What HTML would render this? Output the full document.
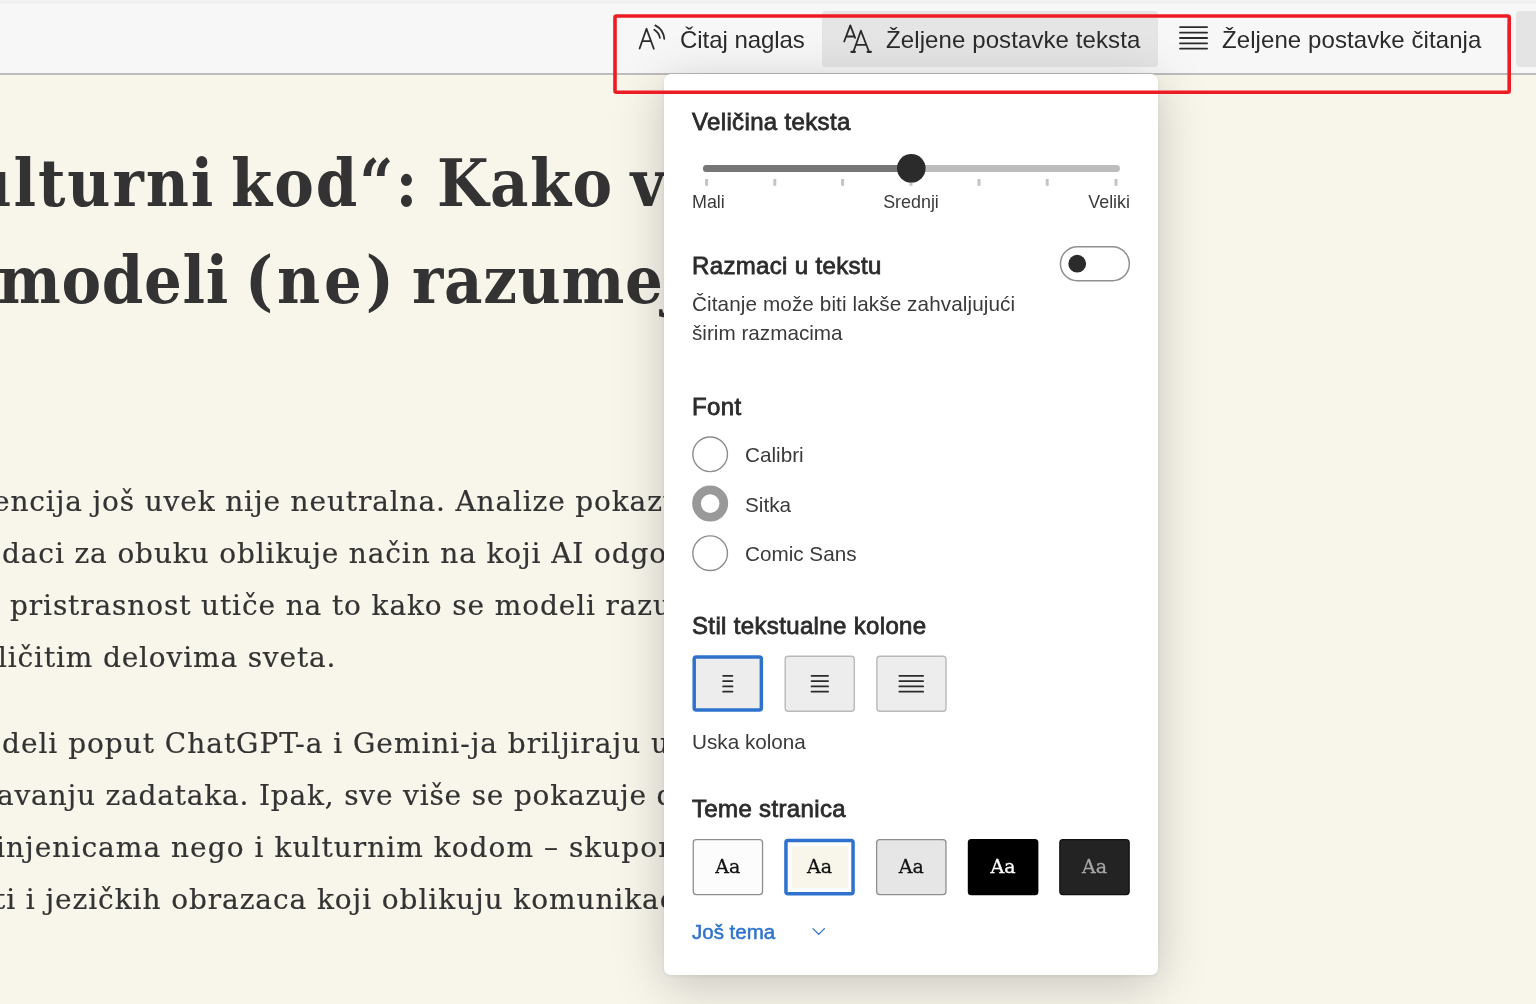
<!DOCTYPE html>
<html lang="sr">
<head>
<meta charset="utf-8">
<title>Čitač</title>
<style>
*{box-sizing:border-box;margin:0;padding:0}
html,body{width:1536px;height:1004px;overflow:hidden}
body{background:#f8f5eb;position:relative;font-family:"Liberation Sans","DejaVu Sans",sans-serif;color:#2b2b2b}
.abs{position:absolute;white-space:nowrap}
/* toolbar */
#bar{position:absolute;left:0;top:0;width:1536px;height:75px;background:#f7f7f7;border-bottom:2px solid #bdbdbd}
#topstrip{position:absolute;left:0;top:0;width:1536px;height:4px;background:linear-gradient(#f5f5f5,#f0f0f0 30%,#eeeeee 60%,#f6f6f6)}
#selbtn{position:absolute;left:822px;top:11px;width:336px;height:56px;background:#e5e5e5;border-radius:4px}
#rbtn{position:absolute;left:1516px;top:11px;width:40px;height:56px;background:#e4e4e4;border-radius:4px}
.tb{font-size:24px;line-height:30px;top:25px;color:#2b2b2b}
/* article */
.h1{font-family:"DejaVu Serif Condensed","DejaVu Serif","Liberation Serif",serif;font-weight:bold;color:#333;font-size:66px;line-height:96px}
.p{font-family:"DejaVu Serif","Liberation Serif",serif;color:#333;font-size:28px;line-height:52px;-webkit-text-stroke:.2px #333}
/* popup */
#pop{position:absolute;left:664px;top:74px;width:494px;height:900.5px;background:#fff;border-radius:7px;box-shadow:0 10px 50px rgba(0,0,0,.205),0 1px 4px rgba(0,0,0,.08);z-index:10}
.hd{font-size:24px;line-height:30px;color:#2b2b2b;left:28px;-webkit-text-stroke:.8px #2b2b2b;letter-spacing:.35px;margin-top:1px}
.lbl{font-size:17.9px;line-height:22px;margin-top:1px;color:#3a3a3a}
.txt{font-size:20.7px;line-height:28px;color:#3a3a3a}

.more{font-size:20.5px;line-height:28px;color:#2f72cd;-webkit-text-stroke:.5px #2f72cd}
#art{position:absolute;left:0;top:0;width:700px;height:1004px;overflow:hidden}
.ln{position:absolute;left:0;white-space:nowrap}
.ln span{position:absolute;top:0;white-space:nowrap}
#pop,#art,.tb{will-change:transform}
.aa{top:779px;width:70.6px;text-align:center;font-family:"DejaVu Serif","Liberation Serif",serif;font-size:19px;line-height:26px;-webkit-text-stroke:.3px currentColor}
</style>
</head>
<body>
<div id="bar"></div>
<div id="topstrip"></div>
<div id="selbtn"></div>
<div id="rbtn"></div>
<div class="abs" style="left:1506.5px;top:25px;width:1.5px;height:27px;background:#cfcfcf"></div>
<svg class="abs" style="left:630px;top:18px" width="50" height="40" viewBox="0 0 50 40" fill="none" stroke="#2b2b2b" stroke-width="1.8" stroke-linecap="round" stroke-linejoin="round"><path d="M9.6 30.5 L16.5 10.8 L23.8 30.7 M12.4 23.1 H21.1"/><path d="M24.3 11.8 A12.2 12.2 0 0 1 29.9 19.9"/><path d="M25.3 7.4 A16.6 16.6 0 0 1 34.3 20.9"/></svg>
<svg class="abs" style="left:835px;top:18px" width="50" height="40" viewBox="0 0 50 40" fill="none" stroke="#2b2b2b" stroke-width="1.8" stroke-linecap="round" stroke-linejoin="round"><path d="M9.2 23.5 L15.3 7.4 L20.1 19.9 M11.6 18.5 H19.1"/><path d="M18.5 33.5 L25.9 12.7 L33.9 33.5 M21.1 26.9 H31.1"/><path d="M16.4 33.8 H19.9 M32.6 33.8 H35.9" stroke-width="2.2"/></svg>
<svg class="abs" style="left:1175px;top:20px" width="40" height="36" viewBox="0 0 40 36" fill="none" stroke="#2b2b2b" stroke-width="1.8" stroke-linecap="round"><path d="M5 7.1 H32.1 M5 12.6 H32.1 M5 18 H32.1 M5 23.3 H32.1 M5 28.6 H32.1"/></svg>
<div id="tb1" class="abs tb" style="left:679.5px;letter-spacing:-.05px">Čitaj naglas</div>
<div id="tb2" class="abs tb" style="left:885.5px;letter-spacing:.1px">Željene postavke teksta</div>
<div id="tb3" class="abs tb" style="left:1221.5px;letter-spacing:.08px">Željene postavke čitanja</div>

<div id="art">
<div class="ln h1" style="top:135px">
<span id="t1" style="left:-31.5px;letter-spacing:1.9px">ulturni</span> <span id="t2" style="left:231px;letter-spacing:2px">kod“:</span> <span id="t3" style="left:437px;letter-spacing:1.4px">Kako</span> <span id="t4" style="left:630.5px">v</span>
</div>
<div class="ln h1" style="top:232px">
<span id="t5" style="left:-2px;letter-spacing:.7px">modeli</span> <span id="t6" style="left:245px;letter-spacing:3.9px">(ne)</span> <span id="t7" style="left:412px;letter-spacing:.7px">razumeju</span>
</div>
<div class="ln p" id="b1" style="top:476px;left:-7px;font-size:28px;letter-spacing:0.851px">encija još uvek nije neutralna. Analize pokazu</div>
<div class="ln p" id="b2" style="top:528px;left:2px;font-size:28px;letter-spacing:0.861px">daci za obuku oblikuje način na koji AI odgov</div>
<div class="ln p" id="b3" style="top:580px;left:10px;font-size:28px;letter-spacing:0.871px">pristrasnost utiče na to kako se modeli razum</div>
<div class="ln p" id="b4" style="top:632px;left:-2px;font-size:28px;letter-spacing:0.836px">ličitim delovima sveta.</div>
<div class="ln p" id="b5" style="top:718px;left:2px;font-size:28px;letter-spacing:0.967px">deli poput ChatGPT-a i Gemini-ja briljiraju u</div>
<div class="ln p" id="b6" style="top:770px;left:-3px;font-size:28px;letter-spacing:0.800px">avanju zadataka. Ipak, sve više se pokazuje d</div>
<div class="ln p" id="b7" style="top:822px;left:-4px;font-size:28px;letter-spacing:1.028px">injenicama nego i kulturnim kodom – skupom</div>
<div class="ln p" id="b8" style="top:874px;left:-6px;font-size:28px;letter-spacing:0.909px">ti i jezičkih obrazaca koji oblikuju komunikac</div>
</div>
<div id="pop">
<svg class="abs" style="left:0;top:0" width="494" height="900" viewBox="0 0 494 900">
<g id="slider"><line x1="42.5" y1="94.4" x2="452.5" y2="94.4" stroke="#bdbdbd" stroke-width="7" stroke-linecap="round"/><line x1="42.5" y1="94.4" x2="247" y2="94.4" stroke="#767676" stroke-width="7" stroke-linecap="round"/>
<rect x="41.1" y="105" width="3" height="6.8" fill="#c4c4c4"/>
<rect x="109.3" y="105" width="3" height="6.8" fill="#c4c4c4"/>
<rect x="177.1" y="105" width="3" height="6.8" fill="#c4c4c4"/>
<rect x="245.5" y="105" width="3" height="6.8" fill="#c4c4c4"/>
<rect x="313.5" y="105" width="3" height="6.8" fill="#c4c4c4"/>
<rect x="381.7" y="105" width="3" height="6.8" fill="#c4c4c4"/>
<rect x="450.5" y="105" width="3" height="6.8" fill="#c4c4c4"/>
<circle cx="247.3" cy="94.3" r="14.3" fill="#2b2b2b"/></g>
<g id="toggle"><rect x="396.45" y="172.75" width="68.9" height="33.9" rx="16.95" fill="#fff" stroke="#8f8f8f" stroke-width="1.5"/><circle cx="413.2" cy="189.7" r="8.9" fill="#2b2b2b"/></g>
<g id="radios"><circle cx="46.15" cy="380.3" r="17.3" fill="#fff" stroke="#8c8c8c" stroke-width="1.4"/>
<circle cx="46.15" cy="429.6" r="13.65" fill="#fff" stroke="#999" stroke-width="8.7"/>
<circle cx="46.15" cy="479.2" r="17.3" fill="#fff" stroke="#8c8c8c" stroke-width="1.4"/></g>
<g id="cols">
<rect x="30.2" y="582.95" width="67.15" height="53.1" rx="2" fill="#ededed" stroke="#2f72cd" stroke-width="3.5"/>
<rect x="121.2" y="582.2" width="69.1" height="55.1" rx="3" fill="#ededed" stroke="#b9b9b9" stroke-width="1.4"/>
<rect x="212.9" y="582.2" width="69.1" height="55.1" rx="3" fill="#ededed" stroke="#b9b9b9" stroke-width="1.4"/>
<line x1="59.1" y1="601.8" x2="68.5" y2="601.8" stroke="#2b2b2b" stroke-width="1.7" stroke-linecap="round"/>
<line x1="59.1" y1="607.1" x2="68.5" y2="607.1" stroke="#2b2b2b" stroke-width="1.7" stroke-linecap="round"/>
<line x1="59.1" y1="612.4" x2="68.5" y2="612.4" stroke="#2b2b2b" stroke-width="1.7" stroke-linecap="round"/>
<line x1="59.1" y1="617.7" x2="68.5" y2="617.7" stroke="#2b2b2b" stroke-width="1.7" stroke-linecap="round"/>
<line x1="147.5" y1="601.8" x2="164.1" y2="601.8" stroke="#2b2b2b" stroke-width="1.7" stroke-linecap="round"/>
<line x1="147.5" y1="607.1" x2="164.1" y2="607.1" stroke="#2b2b2b" stroke-width="1.7" stroke-linecap="round"/>
<line x1="147.5" y1="612.4" x2="164.1" y2="612.4" stroke="#2b2b2b" stroke-width="1.7" stroke-linecap="round"/>
<line x1="147.5" y1="617.7" x2="164.1" y2="617.7" stroke="#2b2b2b" stroke-width="1.7" stroke-linecap="round"/>
<line x1="235.3" y1="601.8" x2="259.2" y2="601.8" stroke="#2b2b2b" stroke-width="1.7" stroke-linecap="round"/>
<line x1="235.3" y1="607.1" x2="259.2" y2="607.1" stroke="#2b2b2b" stroke-width="1.7" stroke-linecap="round"/>
<line x1="235.3" y1="612.4" x2="259.2" y2="612.4" stroke="#2b2b2b" stroke-width="1.7" stroke-linecap="round"/>
<line x1="235.3" y1="617.7" x2="259.2" y2="617.7" stroke="#2b2b2b" stroke-width="1.7" stroke-linecap="round"/>
</g>
<g id="themes">
<rect x="29.25" y="765.65" width="69.3" height="54.9" rx="3" fill="#fcfcfc" stroke="#8f8f8f" stroke-width="1.3"/>
<rect x="121.95" y="766.55" width="67.1" height="53.1" rx="2" fill="#fff" stroke="#2f72cd" stroke-width="3.5"/>
<rect x="127.5" y="772.2" width="56.6" height="41.8" fill="#f8f5ea"/>
<rect x="212.65" y="765.65" width="69.3" height="54.9" rx="3" fill="#e6e6e6" stroke="#8f8f8f" stroke-width="1.3"/>
<rect x="303.8" y="765.0" width="70.6" height="56.2" rx="3.5" fill="#000"/>
<rect x="395.85" y="765.65" width="69.3" height="54.9" rx="3" fill="#232323" stroke="#111" stroke-width="1.3"/>
</g>
<path d="M149 854.6 L154.7 860.4 L160.4 854.6" fill="none" stroke="#2f72cd" stroke-width="1.3" stroke-linecap="round" stroke-linejoin="round"/>
</svg>
  <div id="p1" class="abs hd" style="top:32px">Veličina teksta</div>
  <div id="p2" class="abs lbl" style="left:28px;top:116px">Mali</div>
  <div id="p3" class="abs lbl" style="left:197px;top:116px;width:100px;text-align:center">Srednji</div>
  <div id="p4" class="abs lbl" style="right:28px;top:116px">Veliki</div>
  <div id="p5" class="abs hd" style="top:176px">Razmaci u tekstu</div>
  <div id="p6" class="abs txt" style="left:28px;top:216px;letter-spacing:.1px">Čitanje može biti lakše zahvaljujući</div>
  <div id="p7" class="abs txt" style="left:28px;top:245px">širim razmacima</div>
  <div id="p8" class="abs hd" style="top:317px">Font</div>
  <div id="p9" class="abs txt" style="left:81px;top:367px">Calibri</div>
  <div id="p10" class="abs txt" style="left:81px;top:417px">Sitka</div>
  <div id="p11" class="abs txt" style="left:81px;top:466px">Comic Sans</div>
  <div id="p12" class="abs hd" style="top:536px">Stil tekstualne kolone</div>
  <div id="p13" class="abs txt" style="left:28px;top:654px">Uska kolona</div>
  <div id="p14" class="abs hd" style="top:719px">Teme stranica</div>
  <div id="a1" class="abs aa" style="left:28.6px;color:#111">Aa</div>
  <div id="a2" class="abs aa" style="left:120.2px;color:#111">Aa</div>
  <div id="a3" class="abs aa" style="left:212.0px;color:#111">Aa</div>
  <div id="a4" class="abs aa" style="left:303.8px;color:#fff">Aa</div>
  <div id="a5" class="abs aa" style="left:395.2px;color:#a6a6a6">Aa</div>
  <div id="p15" class="abs more" style="left:28px;top:844px">Još tema</div>
</div>
<svg id="red" class="abs" style="left:600px;top:0;z-index:20" width="936" height="110" viewBox="600 0 936 110"><rect x="615" y="16" width="894.2" height="76.2" rx="1.5" fill="none" stroke="#ed1c24" stroke-width="3.6"/></svg>
</body>
</html>
